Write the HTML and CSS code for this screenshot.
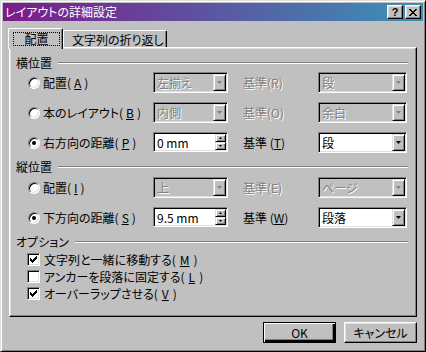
FILE: index.html
```html
<!DOCTYPE html>
<html lang="ja">

<head>
    <meta charset="UTF-8">
    <title>レイアウトの詳細設定</title>
    <link rel="stylesheet" href="styles.css">
</head>

<body>
    <div class="window">
        <div class="titlebar">
            <span class="title">レイアウトの詳細設定</span>
            <div class="caption-buttons">
                <div class="caption-btn help">?</div>
                <div class="caption-btn">
                    <svg width="8" height="7" viewBox="0 0 8 7"><path d="M0 0h2v1h-2zM6 0h2v1h-2zM1 1h2v1h-2zM5 1h2v1h-2zM2 2h4v1h-4zM3 3h2v1h-2zM2 4h4v1h-4zM1 5h2v1h-2zM5 5h2v1h-2zM0 6h2v1h-2zM6 6h2v1h-2z" fill="#000"/></svg>
                </div>
            </div>
        </div>

        <div class="client">
            <div class="tabs">
                <div class="tab selected"><span class="focus">配置</span></div>
                <div class="tab">文字列の折り返し</div>
            </div>

            <div class="panel">
                <!-- 横位置 -->
                <div class="group-head"><span>横位置</span><span class="etch"></span></div>
                <div class="row first">
                    <div class="opt"><span class="radio"></span>配置(<u>A</u>)</div>
                    <div class="combo disabled"><span class="value">左揃え</span><span class="drop"><i></i></span></div>
                    <span class="cap disabled">基準(R)</span>
                    <div class="combo disabled"><span class="value">段</span><span class="drop"><i></i></span></div>
                </div>
                <div class="row">
                    <div class="opt"><span class="radio"></span>本のレイアウト(<u>B</u>)</div>
                    <div class="combo disabled"><span class="value">内側</span><span class="drop"><i></i></span></div>
                    <span class="cap disabled">基準(O)</span>
                    <div class="combo disabled"><span class="value">余白</span><span class="drop"><i></i></span></div>
                </div>
                <div class="row">
                    <div class="opt"><span class="radio on"></span>右方向の距離(<u>P</u>)</div>
                    <div class="spin"><span class="value">0 mm</span><span class="spin-btns"><span class="up"><i></i></span><span class="down"><i></i></span></span></div>
                    <span class="cap">基準 (<u>T</u>)</span>
                    <div class="combo"><span class="value">段</span><span class="drop"><i></i></span></div>
                </div>

                <!-- 縦位置 -->
                <div class="group-head second"><span>縦位置</span><span class="etch"></span></div>
                <div class="row first">
                    <div class="opt"><span class="radio"></span>配置(<u>I</u>)</div>
                    <div class="combo disabled"><span class="value">上</span><span class="drop"><i></i></span></div>
                    <span class="cap disabled">基準(E)</span>
                    <div class="combo disabled"><span class="value">ページ</span><span class="drop"><i></i></span></div>
                </div>
                <div class="row">
                    <div class="opt"><span class="radio on"></span>下方向の距離(<u>S</u>)</div>
                    <div class="spin"><span class="value">9.5 mm</span><span class="spin-btns"><span class="up"><i></i></span><span class="down"><i></i></span></span></div>
                    <span class="cap">基準 (<u>W</u>)</span>
                    <div class="combo"><span class="value">段落</span><span class="drop"><i></i></span></div>
                </div>

                <!-- オプション -->
                <div class="group-head second"><span>オプション</span><span class="etch"></span></div>
                <div class="check first"><span class="box on"><svg width="7" height="7" viewBox="0 0 7 7"><path d="M0 2H1V3H2V4H3V3H4V2H5V1H6V0H7V3H6V4H5V5H4V6H3V7H2V6H1V5H0Z" fill="#000"/></svg></span>文字列と一緒に移動する(<u>M</u>)</div>
                <div class="check"><span class="box"></span>アンカーを段落に固定する(<u>L</u>)</div>
                <div class="check"><span class="box on"><svg width="7" height="7" viewBox="0 0 7 7"><path d="M0 2H1V3H2V4H3V3H4V2H5V1H6V0H7V3H6V4H5V5H4V6H3V7H2V6H1V5H0Z" fill="#000"/></svg></span>オーバーラップさせる(<u>V</u>)</div>
            </div>

            <div class="buttons">
                <div class="btn default">OK</div>
                <div class="btn">キャンセル</div>
            </div>
        </div>
    </div>
</body>

</html>
```

FILE: styles.css
```css
* {
    box-sizing: border-box;
}

body {
    margin: 0;
    background: #c0c0c0;
    font-family: "Noto Sans CJK JP", "Noto Sans", sans-serif;
    font-size: 12px;
    font-feature-settings: "palt";
    color: #000;
}

u {
    text-decoration-thickness: 1px;
    text-underline-offset: 1px;
}

/* window frame */
.window {
    width: 426px;
    height: 352px;
    border: 1px solid;
    border-color: #dfdfdf #000 #000 #dfdfdf;
    box-shadow: inset 1px 1px #fff, inset -1px -1px #808080;
    padding: 2px;
    display: flex;
    flex-direction: column;
}

.titlebar {
    height: 18px;
    display: flex;
    align-items: center;
    justify-content: space-between;
    padding: 0 2px;
    background: linear-gradient(to right, #7d1a8a, #3a92b8);
    color: #fff;
}

.title {
    line-height: 18px;
}

.caption-buttons {
    display: flex;
    gap: 2px;
}

.caption-btn {
    width: 16px;
    height: 14px;
    background: #c0c0c0;
    border: 1px solid;
    border-color: #fff #000 #000 #fff;
    box-shadow: inset -1px -1px #808080, inset 1px 1px #dfdfdf;
    display: flex;
    align-items: center;
    justify-content: center;
    color: #000;
}

.caption-btn.help {
    font: bold 11px "Liberation Sans", sans-serif;
    line-height: 12px;
}

.client {
    flex: 1;
    padding: 7px 6px 0 6px;
    display: flex;
    flex-direction: column;
}

/* tabs */
.tabs {
    display: flex;
    align-items: flex-end;
    height: 19px;
}

.tab {
    height: 17px;
    width: 104px;
    padding: 2px 0 0 8px;
    border-left: 1px solid #fff;
    border-top: 1px solid #fff;
    border-right: 1px solid #000;
    border-radius: 2px 2px 0 0;
    box-shadow: inset -1px 0 #808080;
    line-height: 14px;
}

.tab.selected {
    position: relative;
    z-index: 1;
    width: 55px;
    height: 21px;
    margin-left: -1px;
    margin-bottom: -2px;
    padding: 3px 0 0 4px;
    background: #c0c0c0;
}

.focus {
    display: block;
    width: 47px;
    height: 14px;
    border: 1px dotted #000;
    text-align: center;
    line-height: 12px;
}

.panel {
    height: 270px;
    border: 1px solid;
    border-color: #fff #000 #000 #fff;
    box-shadow: inset -1px -1px #808080, inset 1px 1px #dfdfdf;
    padding: 8px 8px 0 6px;
}

.group-head {
    display: flex;
    align-items: center;
    height: 14px;
    line-height: 14px;
}

.group-head.second {
    margin-top: 7px;
}

.etch {
    flex: 1;
    height: 2px;
    margin-left: 6px;
    border-top: 1px solid #808080;
    border-bottom: 1px solid #fff;
}

/* option rows */
.row {
    display: grid;
    grid-template-columns: 125px 75px 90px 89px;
    align-items: center;
    height: 21px;
    margin: 9px 0 0 12px;
}

.row.first {
    margin-top: 3px;
}

.group-head + .row.first {
    margin-top: 2px;
}

.group-head.second + .row.first {
    margin-top: 3px;
}

.opt {
    display: flex;
    align-items: center;
    gap: 3px;
    white-space: nowrap;
}

.radio {
    position: relative;
    width: 12px;
    height: 12px;
    border: 1px solid;
    border-color: #808080 #fff #fff #808080;
    border-radius: 50%;
    box-shadow: inset 1px 1px #000, inset -1px -1px #dfdfdf;
    background: #fff;
}

.radio.on::after {
    content: "";
    position: absolute;
    left: 3px;
    top: 3px;
    width: 4px;
    height: 4px;
    border-radius: 50%;
    background: #000;
}

.cap {
    padding-left: 15px;
    white-space: nowrap;
}

.disabled,
.disabled .value {
    color: #808080;
    text-shadow: 1px 1px #fff;
}

.combo,
.spin {
    display: flex;
    height: 21px;
    border: 1px solid;
    border-color: #808080 #fff #fff #808080;
    box-shadow: inset 1px 1px #000, inset -1px -1px #dfdfdf;
    background: #fff;
    padding: 2px 2px 2px 3px;
}

.combo.disabled {
    background: #c0c0c0;
}

.value {
    flex: 1;
    line-height: 16px;
    white-space: nowrap;
}

.drop {
    width: 13px;
    height: 17px;
    margin: -2px -2px -2px 0;
    transform: translate(-1px, 1px);
    background: #c0c0c0;
    border: 1px solid;
    border-color: #dfdfdf #000 #000 #dfdfdf;
    box-shadow: inset 1px 1px #fff, inset -1px -1px #808080;
    display: flex;
    align-items: center;
    justify-content: center;
}

.drop i {
    width: 5px;
    height: 3px;
    background: #000;
    clip-path: polygon(0 0, 100% 0, 50% 100%);
}

.disabled .drop i {
    background: #808080;
}

.spin {
    height: 20px;
    align-self: start;
}

.spin-btns {
    display: flex;
    flex-direction: column;
    width: 11px;
    margin: -1px -1px -1px 0;
}

.spin-btns span {
    flex: 1;
    background: #c0c0c0;
    border: 1px solid;
    border-color: #dfdfdf #000 #000 #dfdfdf;
    box-shadow: inset 1px 1px #fff, inset -1px -1px #808080;
    display: flex;
    align-items: center;
    justify-content: center;
}

.spin-btns i {
    width: 3px;
    height: 2px;
    background: #000;
}

.spin-btns .up i {
    clip-path: polygon(50% 0, 100% 100%, 0 100%);
}

.spin-btns .down i {
    clip-path: polygon(0 0, 100% 0, 50% 100%);
}

/* checkboxes */
.check {
    display: flex;
    align-items: center;
    gap: 4px;
    height: 17px;
    margin-left: 11px;
    white-space: nowrap;
}

.check.first {
    margin-top: 2px;
}

.box {
    width: 13px;
    height: 13px;
    border: 1px solid;
    border-color: #808080 #fff #fff #808080;
    box-shadow: inset 1px 1px #000, inset -1px -1px #dfdfdf;
    background: #fff;
    display: flex;
    align-items: center;
    justify-content: center;
}

/* dialog buttons */
.buttons {
    display: flex;
    justify-content: flex-end;
    gap: 8px;
    margin-top: 5px;
}

.btn {
    width: 73px;
    height: 21px;
    border: 1px solid;
    border-color: #fff #000 #000 #fff;
    box-shadow: inset -1px -1px #808080, inset 1px 1px #dfdfdf;
    text-align: center;
    line-height: 19px;
}

.btn.default {
    border-color: #000;
    box-shadow: inset 1px 1px #fff, inset -2px -2px #000, inset -3px -3px #808080;
}
```
